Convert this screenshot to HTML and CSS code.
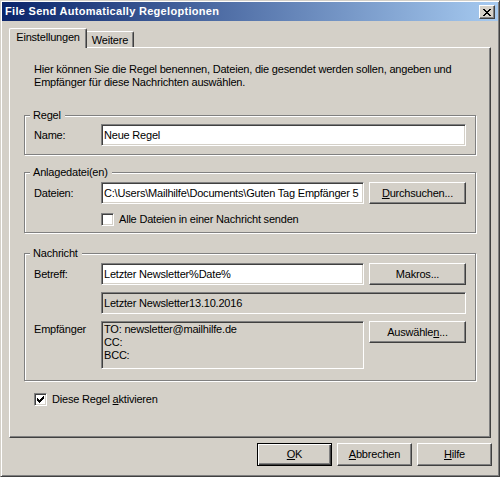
FILE: index.html
```html
<!DOCTYPE html>
<html lang="de">
<head>
<meta charset="utf-8">
<title>File Send Automatically Regeloptionen</title>
<link rel="stylesheet" href="styles.css">
</head>
<body>
<div class="window">
  <div class="titlebar">
    <span class="title">File Send Automatically Regeloptionen</span>
    <span class="close"><svg width="8" height="7" viewBox="0 0 8 7" shape-rendering="crispEdges"><path fill="#000" d="M0 0h2v1H0z M6 0h2v1H6z M1 1h2v1H1z M5 1h2v1H5z M2 2h4v1H2z M3 3h2v1H3z M2 4h4v1H2z M1 5h2v1H1z M5 5h2v1H5z M0 6h2v1H0z M6 6h2v1H6z"/></svg></span>
  </div>
  <div class="tabs">
    <div class="tab active">Einstellungen</div>
    <div class="tab">Weitere</div>
  </div>
  <div class="panel">
    <p class="intro">Hier können Sie die Regel benennen, Dateien, die gesendet werden sollen, angeben und<br>Empfänger für diese Nachrichten auswählen.</p>

    <fieldset class="group g-regel">
      <legend>Regel</legend>
      <div class="row">
        <span class="lbl">Name:</span>
        <div class="edit full">Neue Regel</div>
      </div>
    </fieldset>

    <fieldset class="group g-anlage">
      <legend>Anlagedatei(en)</legend>
      <div class="row">
        <span class="lbl">Dateien:</span>
        <div class="edit half"><span class="clip">C:\Users\Mailhilfe\Documents\Guten Tag Empfänger 5</span></div>
        <div class="btn side"><u>D</u>urchsuchen...</div>
      </div>
      <div class="row checkrow indent">
        <span class="check"></span>
        <span class="cblabel">Alle Dateien in einer Nachricht senden</span>
      </div>
    </fieldset>

    <fieldset class="group g-nachricht">
      <legend>Nachricht</legend>
      <div class="row">
        <span class="lbl">Betreff:</span>
        <div class="edit half">Letzter Newsletter%Date%</div>
        <div class="btn side">Makros...</div>
      </div>
      <div class="row gaprow indent">
        <div class="edit full readonly">Letzter Newsletter13.10.2016</div>
      </div>
      <div class="row gaprow top">
        <span class="lbl lbl-top">Empfänger</span>
        <div class="recips">TO: newsletter@mailhilfe.de<br>CC:<br>BCC:</div>
        <div class="btn side">Auswähle<u>n</u>...</div>
      </div>
    </fieldset>

    <div class="row checkrow activate">
      <span class="check checked"><svg width="7" height="7" viewBox="0 0 7 7" shape-rendering="crispEdges"><path fill="#000" d="M6 0h1v1H6z M5 1h2v1H5z M0 2h1v1H0z M4 2h3v1H4z M0 3h2v1H0z M3 3h3v1H3z M0 4h5v1H0z M1 5h3v1H1z M2 6h1v1H2z"/></svg></span>
      <span class="cblabel">Diese Regel <u>a</u>ktivieren</span>
    </div>
  </div>
  <div class="footer">
    <div class="btn dlg default"><u>O</u>K</div>
    <div class="btn dlg"><u>A</u>bbrechen</div>
    <div class="btn dlg"><u>H</u>ilfe</div>
  </div>
</div>
</body>
</html>
```

FILE: styles.css
```css
* { box-sizing: border-box; }
html, body { margin: 0; padding: 0; }
body {
  background: #ffffff;
  font-family: "Liberation Sans", Arial, sans-serif;
  font-size: 11px;
  line-height: 13px;
  letter-spacing: -0.2px;
  color: #000;
}
.window {
  width: 500px;
  height: 477px;
  background: #d4d0c8;
  border: 1px solid;
  border-color: #d4d0c8 #404040 #404040 #d4d0c8;
  box-shadow: inset 1px 1px 0 #fff, inset -1px -1px 0 #808080;
  padding: 1px;
  display: flex;
  flex-direction: column;
}
.titlebar {
  height: 19px;
  flex: none;
  display: flex;
  align-items: center;
  justify-content: space-between;
  padding: 0 3px 0 3px;
  background: linear-gradient(to right, #0a246a, #a6caf0);
}
.title {
  color: #fff;
  font-weight: bold;
  font-size: 11px;
  letter-spacing: 0.3px;
}
.close {
  display: block;
  width: 16px;
  height: 14px;
  background: #d4d0c8;
  border: 1px solid;
  border-color: #fff #404040 #404040 #fff;
  box-shadow: inset -1px -1px 0 #808080;
  padding: 3px 0 0 3px;
  line-height: 0;
}
.tabs {
  display: flex;
  align-items: flex-end;
  margin: 7px 0 -1px 7px;
  position: relative;
  z-index: 1;
  flex: none;
}
.tab {
  background: #d4d0c8;
  text-align: center;
  border-top: 1px solid #fff;
  border-right: 1px solid #404040;
  box-shadow: inset -1px 0 0 #808080;
  border-top-right-radius: 2px;
  white-space: nowrap;
}
.tab.active {
  width: 78px;
  height: 20px;
  padding-top: 2px;
  border-left: 1px solid #fff;
  border-top-left-radius: 2px;
}
.tab:not(.active) {
  width: 47px;
  height: 16px;
  padding-top: 2px;
  margin-bottom: 1px;
}
.panel {
  margin-left: 7px;
  width: 482px;
  height: 391px;
  flex: none;
  border: 1px solid;
  border-color: #fff #404040 #404040 #fff;
  box-shadow: inset -1px -1px 0 #808080;
  padding: 15px 0 0 14px;
}
.intro {
  margin: 0 0 0 10px;
  white-space: nowrap;
}
.group {
  margin: 0;
  width: 452px;
  min-inline-size: 0;
  border: 1px solid #808080;
  box-shadow: 1px 1px 0 #fff, inset 1px 1px 0 #fff;
  padding: 3px 9px 8px 9px;
}
.group legend {
  padding: 0 4px 0 3px;
  margin-left: -4px;
  background: #d4d0c8;
  line-height: 13px;
}
.g-regel { margin-top: 20px; padding-top: 2px; }
.g-anlage { margin-top: 11px; padding-bottom: 6px; }
.g-nachricht { margin-top: 14px; padding-bottom: 11px; }
.row {
  display: flex;
  align-items: center;
}
.row.top { align-items: flex-start; }
.indent { margin-left: 67px; }
.gaprow { margin-top: 7px; }
.lbl {
  width: 67px;
  flex: none;
}
.lbl-top { padding-top: 2px; }
.edit {
  height: 22px;
  line-height: 20px;
  background: #fff;
  border: 1px solid;
  border-color: #808080 #fff #fff #808080;
  box-shadow: inset 1px 1px 0 #404040, inset -1px -1px 0 #d4d0c8;
  padding: 0 2px;
  white-space: nowrap;
  overflow: hidden;
  flex: none;
}
.clip {
  display: block;
  overflow: hidden;
  white-space: nowrap;
}
.edit.full { width: 365px; }
.edit.half { width: 263px; }
.edit.readonly { background: #d4d0c8; }
.recips {
  width: 263px;
  height: 48px;
  flex: none;
  background: #d4d0c8;
  border: 1px solid;
  border-color: #808080 #fff #fff #808080;
  box-shadow: inset 1px 1px 0 #404040, inset -1px -1px 0 #d4d0c8;
  padding: 1px 2px;
  white-space: nowrap;
}
.btn {
  background: #d4d0c8;
  border: 1px solid;
  border-color: #fff #404040 #404040 #fff;
  box-shadow: inset -1px -1px 0 #808080;
  text-align: center;
  white-space: nowrap;
  flex: none;
}
.btn.side {
  width: 97px;
  height: 22px;
  line-height: 20px;
  margin-left: 5px;
}
.btn.dlg {
  width: 75px;
  height: 23px;
  line-height: 21px;
}
.btn.default {
  border-color: #000;
  box-shadow: inset 1px 1px 0 #fff, inset -1px -1px 0 #404040, inset -2px -2px 0 #808080;
}
.checkrow { height: 13px; }
.g-anlage .checkrow { margin-top: 9px; }
.check {
  width: 13px;
  height: 13px;
  flex: none;
  background: #fff;
  border: 1px solid;
  border-color: #808080 #fff #fff #808080;
  box-shadow: inset 1px 1px 0 #404040, inset -1px -1px 0 #d4d0c8;
  padding: 2px 0 0 2px;
  line-height: 0;
}
.cblabel {
  margin-left: 5px;
  white-space: nowrap;
}
.activate {
  margin: 12px 0 0 10px;
}
.footer {
  display: flex;
  justify-content: flex-end;
  gap: 5px;
  margin-top: 5px;
  padding-right: 6px;
}
u { text-decoration: underline; text-underline-offset: 1px; }
```
